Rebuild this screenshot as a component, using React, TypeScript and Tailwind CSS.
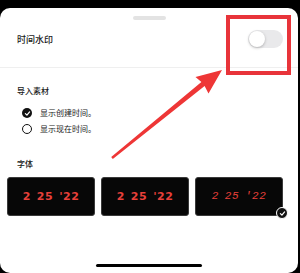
import React from 'react';

const cjk = { fontFamily: '"Noto Sans CJK SC", "Noto Sans", sans-serif' };

function CheckDot({ on }: { on: boolean }) {
  if (!on) {
    return <span className="w-[10px] h-[10px] rounded-full border-[1.5px] border-[#111] bg-white" />;
  }
  return (
    <span className="w-[10px] h-[10px] rounded-full bg-[#111] flex items-center justify-center">
      <svg width="7" height="7" viewBox="0 0 10 10">
        <path d="M2 5.2 L4.2 7.3 L8 2.8" fill="none" stroke="#fff" strokeWidth="1.8" strokeLinecap="round" strokeLinejoin="round" />
      </svg>
    </span>
  );
}

function FontCard({ variant, selected }: { variant: number; selected?: boolean }) {
  const fonts = [
    'font-["DejaVu_Sans"] font-bold',
    'font-["DejaVu_Sans"] font-bold',
    'font-["Liberation_Mono"] italic',
  ];
  return (
    <div className="relative w-[88px] h-[39px] rounded-[3px] bg-[#070707] border border-[#3a3a3a] flex items-center justify-center">
      <div className={`flex gap-[6px] text-[11px] leading-none text-[#e8403a] tracking-[0.5px] ${fonts[variant]}`}>
        <span>2</span>
        <span>25</span>
        <span>'22</span>
      </div>
      {selected && (
        <span className="absolute right-[-6px] bottom-[-4px] w-[12px] h-[12px] rounded-full bg-[#111] border border-white flex items-center justify-center">
          <svg width="7" height="7" viewBox="0 0 10 10">
            <path d="M2 5.2 L4.2 7.3 L8 2.8" fill="none" stroke="#fff" strokeWidth="1.8" strokeLinecap="round" strokeLinejoin="round" />
          </svg>
        </span>
      )}
    </div>
  );
}

export default function App() {
  return (
    <div className="relative w-[300px] h-[273px] bg-black overflow-hidden pt-[8px] pr-[2px]" style={cjk}>
      <div className="h-full bg-white rounded-[10px] flex flex-col text-[#1a1a1a]">
        {/* handle */}
        <div className="self-center mt-[8px] w-[33px] h-[4px] rounded-full bg-[#e3e3e3]" />

        {/* timestamp toggle row */}
        <div className="mt-[10px] h-[18px] pl-[17px] pr-[15px] flex items-center justify-between">
          <span className="text-[9px] font-medium leading-none">时间水印</span>
          <div className="relative w-[35px] h-[18px] rounded-full bg-[#e9e9eb]">
            <div className="absolute left-[1px] top-[1px] w-[16px] h-[16px] rounded-full bg-white shadow-[0_1px_3px_rgba(0,0,0,0.25)]" />
          </div>
        </div>

        <div className="mt-[19px] border-t border-[#efefef]" />

        {/* import section */}
        <div className="mt-[17px] pl-[17px] h-[12px] flex items-center text-[8px] font-medium">导入素材</div>
        <div className="mt-[8px] pl-[22px] flex flex-col">
          <div className="h-[16px] flex items-center gap-[8px] text-[8px]">
            <CheckDot on />
            <span>显示创建时间。</span>
          </div>
          <div className="h-[16px] flex items-center gap-[8px] text-[8px]">
            <CheckDot on={false} />
            <span>显示现在时间。</span>
          </div>
        </div>

        {/* font section */}
        <div className="mt-[21px] pl-[17px] h-[12px] flex items-center text-[8px] font-medium">字体</div>
        <div className="mt-[7px] pl-[7px] flex gap-[6px]">
          <FontCard variant={0} />
          <FontCard variant={1} />
          <FontCard variant={2} selected />
        </div>

        {/* home indicator */}
        <div className="mt-auto mb-[6px] self-center w-[106px] h-[3px] rounded-full bg-black" />
      </div>

      {/* annotation box */}
      <div className="absolute left-[226px] top-[15px] w-[65px] h-[60px] border-[4px] border-[#e8343a]" />

      {/* annotation arrow */}
      <svg className="absolute left-0 top-0" width="300" height="273" viewBox="0 0 300 273">
        <path
          d="M111.2 157.1 L201.4 82.1 L195.5 77 L222 70 L208.5 93.5 L204.6 85.9 L112.8 158.9 Z"
          fill="#ee3636"
          strokeLinejoin="round"
        />
      </svg>
    </div>
  );
}
